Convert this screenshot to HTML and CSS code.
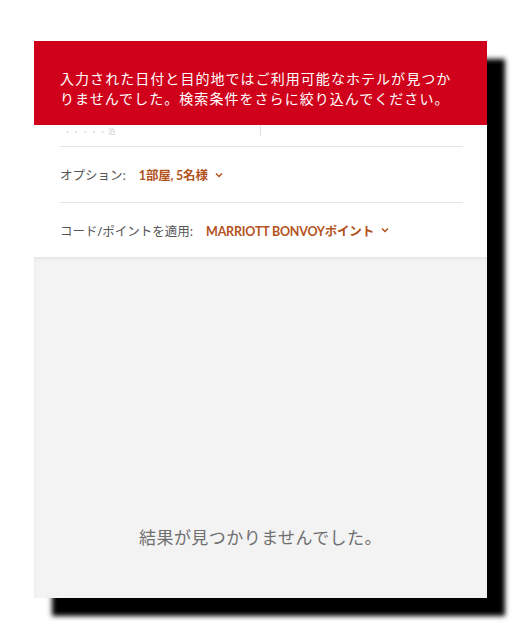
FILE: index.html
```html
<!DOCTYPE html>
<html lang="ja">
<head>
<meta charset="utf-8">
<link rel="stylesheet" href="styles.css">
</head>
<body>
<div class="frame">
  <div class="form">
    <div class="dates">
      <div class="date-col">
        <div class="date-main"><span>4</span><span>1泊</span></div>
        <div class="date-sub">・ ・ ・ ・ ・ 泊</div>
      </div>
      <div class="divider"></div>
      <div class="date-col right"></div>
    </div>
    <div class="row">
      <span class="label">オプション:</span>
      <span class="value">1部屋, 5名様</span>
      <svg class="chev" width="8" height="6" viewBox="0 0 8 6"><path d="M1 1.5 L4 4.5 L7 1.5" fill="none" stroke="#b3531e" stroke-width="1.5"/></svg>
    </div>
    <div class="row last">
      <span class="label">コード/ポイントを適用:</span>
      <span class="value">MARRIOTT BONVOYポイント</span>
      <svg class="chev" width="8" height="6" viewBox="0 0 8 6"><path d="M1 1.5 L4 4.5 L7 1.5" fill="none" stroke="#b3531e" stroke-width="1.5"/></svg>
    </div>
  </div>
  <div class="results">
    <p class="empty">結果が見つかりませんでした。</p>
  </div>
  <div class="toast">入力された日付と目的地ではご利用可能なホテルが見つかりませんでした。検索条件をさらに絞り込んでください。</div>
</div>
</body>
</html>
```
FILE: styles.css
```css
html, body {
  margin: 0;
  padding: 0;
  background: #ffffff;
}
body {
  font-family: "Noto Sans", "Noto Sans CJK JP", sans-serif;
  padding: 41px 0 0 34px;
  min-height: 640px;
  box-sizing: border-box;
}
.frame {
  position: relative;
  width: 453px;
  height: 557px;
  background: #ffffff;
  box-shadow: 18px 18px 5px #000000;
  display: flex;
  flex-direction: column;
  overflow: hidden;
}
.form {
  padding: 0 24px 0 26px;
}
.dates {
  height: 105px;
  border-bottom: 1px solid #e4e4e4;
  display: flex;
  align-items: flex-end;
}
.date-col {
  width: 200px;
  box-sizing: border-box;
  padding: 0 12px 10px 0;
  display: flex;
  flex-direction: column;
}
.date-col.right {
  flex: 1;
  width: auto;
}
.date-main {
  display: flex;
  justify-content: space-between;
  color: #d0021b;
  font-size: 12px;
  font-weight: 700;
  line-height: 14px;
  margin-bottom: 1px;
}
.date-sub {
  color: #c8c8c8;
  font-size: 7px;
  line-height: 8px;
  padding-left: 4px;
}
.divider {
  width: 1px;
  height: 22px;
  background: #e0e0e0;
  margin-bottom: 10px;
}
.row {
  height: 55px;
  display: flex;
  align-items: center;
  border-bottom: 1px solid #e4e4e4;
  font-size: 12.5px;
}
.row.last {
  border-bottom: none;
  height: 54px;
}
.label {
  color: #555555;
  margin-right: 13px;
}
.value {
  color: #b3531e;
  font-weight: 700;
  letter-spacing: -0.2px;
  font-family: "Lato", "Noto Sans CJK JP", sans-serif;
}
.chev {
  margin-left: 7px;
}
.results {
  flex: 1;
  background: #f3f3f3;
  box-shadow: inset 0 2px 3px rgba(0, 0, 0, 0.06);
  display: flex;
  justify-content: center;
}
.empty {
  margin: 269px 0 0 0;
  color: #6f6f6f;
  font-size: 17px;
  letter-spacing: 0.45px;
  line-height: 24px;
}
.toast {
  position: absolute;
  top: 0;
  left: 0;
  right: 0;
  height: 84px;
  box-sizing: border-box;
  background: #d0021b;
  color: #ffffff;
  font-size: 14px;
  letter-spacing: 1.05px;
  line-height: 19.5px;
  padding: 28px 30px 0 26px;
}
```
